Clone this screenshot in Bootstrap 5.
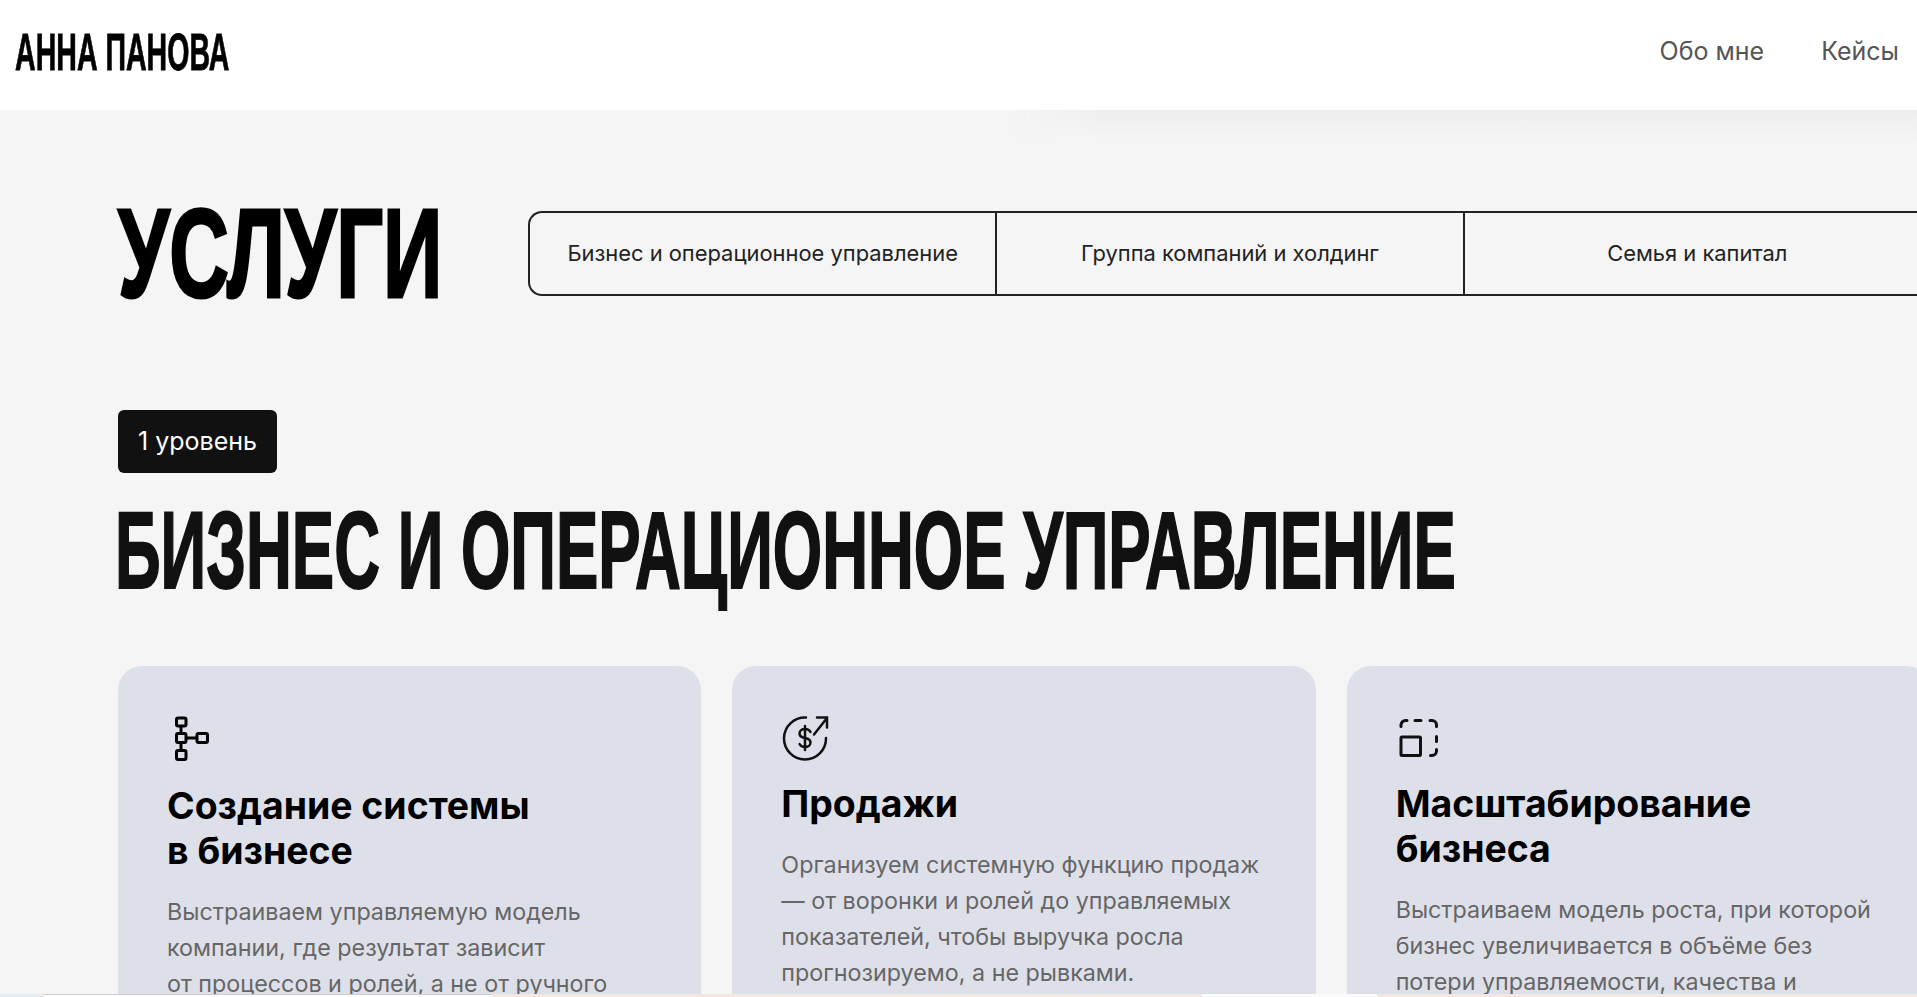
<!DOCTYPE html>
<html lang="ru">

<head>
  <meta charset="UTF-8">
  <meta name="viewport" content="width=device-width, initial-scale=1.0">
  <title>Анна Панова — Услуги</title>
  <link href="https://cdn.jsdelivr.net/npm/bootstrap@5.3.0/dist/css/bootstrap.min.css" rel="stylesheet">
  <script src="https://cdn.jsdelivr.net/npm/bootstrap@5.3.0/dist/js/bootstrap.bundle.min.js"></script>

  <style>
    html,
    body {
      height: 100%;
      overflow: hidden;
    }

    body {
      background-color: #f5f5f5;
      font-family: Inter, "Liberation Sans", sans-serif;
      color: #111;
    }

    .site-header {
      position: relative;
      height: 110px;
      padding: 0 18px 6px 15px;
      background: #fff;
    }

    /* soft shade under the right part of the header */
    .header-shade {
      position: absolute;
      top: 110px;
      left: 1010px;
      right: 0;
      height: 32px;
      background: linear-gradient(#eeeeee, #f5f5f5);
      -webkit-mask-image: linear-gradient(to right, transparent, #000 90px);
      mask-image: linear-gradient(to right, transparent, #000 90px);
    }

    .narrow {
      display: block;
      font-family: "Liberation Sans", sans-serif;
      font-weight: 700;
      line-height: 1;
      white-space: nowrap;
      transform-origin: left center;
      color: #000;
    }

    .logo-box {
      width: 215px;
    }

    .logo-text {
      font-size: 51px;
      -webkit-text-stroke: .8px #000;
      transform: scaleX(.56);
    }

    .site-nav {
      gap: 57px;
    }

    .site-nav a {
      font-size: 25px;
      color: #555;
      text-decoration: none;
    }

    .page-body {
      width: 1812px;
      margin-left: 118px;
    }

    .services-top {
      padding-top: 80px;
    }

    .title-box {
      width: 410px;
      flex: none;
    }

    .title-text {
      font-size: 127px;
      -webkit-text-stroke: 3px #000;
      transform: scaleX(.65);
    }

    .tabs-box {
      flex: 1;
      height: 85px;
      border: 2px solid #222;
      border-radius: 14px 0 0 14px;
      border-right: 0;
    }

    .tab-item {
      flex: 1;
      font-size: 21.9px;
      color: #222;
    }

    .tab-item+.tab-item {
      border-left: 2px solid #222;
    }

    .level-tag {
      width: 159px;
      height: 63px;
      margin-top: 93px;
      border-radius: 6px;
      background: #111;
      color: #fff;
      font-size: 25px;
    }

    .section-name {
      margin: 22px 0 0 -3px;
      font-size: 110px;
      -webkit-text-stroke: 2px #111;
      transform: scaleX(.577);
      color: #111;
    }

    .cards-row {
      gap: 31px;
      margin-top: 61px;
    }

    .service-item {
      flex: 1 1 0;
      height: 500px;
      padding: 50px 50px 50px 49px;
      border-radius: 24px;
      background: #dee0e9;
    }

    .item-icon {
      display: block;
      width: 48px;
      height: 48px;
      margin-bottom: 17px;
    }

    .item-icon-tall {
      height: 50px;
    }

    .item-title {
      margin: 0 0 21px;
      font-size: 37.4px;
      line-height: 45px;
      font-weight: 700;
      color: #000;
    }

    .item-text {
      margin: 0;
      font-size: 23.3px;
      line-height: 36px;
      color: #666;
    }

    .bottom-strip {
      position: fixed;
      left: 0;
      right: 0;
      bottom: 0;
      height: 3px;
    }

    .strip-blue {
      width: 44px;
      background: #e4edf4;
    }

    .strip-tab {
      background: #fff;
      border-top: 1px solid #ccc;
    }

    .strip-first {
      width: 448px;
    }

    .strip-pink {
      background: #f4e7e2;
    }

    .strip-wide {
      width: 710px;
    }

    .strip-white {
      width: 175px;
      background: #fbfbfb;
    }
  </style>

</head>

<body>

  <header class="site-header d-flex align-items-center justify-content-between">
    <div class="logo-box"><span class="narrow logo-text">АННА ПАНОВА</span></div>
    <nav class="site-nav d-flex">
      <a href="#">Обо мне</a>
      <a href="#">Кейсы</a>
    </nav>
    <div class="header-shade"></div>
  </header>

  <main class="page-body">
    <div class="services-top d-flex align-items-center">
      <div class="title-box"><h1 class="narrow title-text m-0">УСЛУГИ</h1></div>
      <div class="tabs-box d-flex">
        <div class="tab-item d-flex align-items-center justify-content-center">Бизнес и операционное управление</div>
        <div class="tab-item d-flex align-items-center justify-content-center">Группа компаний и холдинг</div>
        <div class="tab-item d-flex align-items-center justify-content-center">Семья и капитал</div>
      </div>
    </div>

    <div class="level-tag d-flex align-items-center justify-content-center">1 уровень</div>
    <h2 class="narrow section-name">БИЗНЕС И ОПЕРАЦИОННОЕ УПРАВЛЕНИЕ</h2>

    <div class="cards-row d-flex">
      <div class="service-item">
        <svg class="item-icon item-icon-tall" viewBox="0 0 48 50" fill="none" stroke="#000" stroke-width="3">
          <rect x="9.500" y="2" width="9.500" height="8" rx="1.500" />
          <rect x="9.500" y="17.500" width="9.500" height="9" rx="1.500" />
          <rect x="9.500" y="34.500" width="9.500" height="9" rx="1.500" />
          <rect x="30" y="17.500" width="10.500" height="9" rx="1.500" />
          <path d="M14 10v7.500M14 26.500v8M19 22h11" />
        </svg>
        <h3 class="item-title">Создание системы<br>в бизнесе</h3>
        <p class="item-text">Выстраиваем управляемую модель компании, где результат зависит<br>от процессов и ролей, а не от ручного управления.</p>
      </div>

      <div class="service-item">
        <svg class="item-icon" viewBox="0 0 48 48" fill="none" stroke="#111" stroke-width="2.500" stroke-linecap="round">
          <path d="M25 1.500A21 21 0 1 0 45 22" />
          <path d="M33 18.500 46 2M36 1.500h10v10" />
          <path d="M29.500 16c-1-2-3-3-5.500-3s-5.500 1.500-5.500 4.500 3 4 5.500 4.500 5.500 1.500 5.500 4.500-3 4.500-5.500 4.500-4.500-1-5.500-3M24 10v24" />
        </svg>
        <h3 class="item-title">Продажи</h3>
        <p class="item-text">Организуем системную функцию продаж — от воронки и ролей до управляемых показателей, чтобы выручка росла прогнозируемо, а не рывками.</p>
      </div>

      <div class="service-item">
        <svg class="item-icon" viewBox="0 0 48 48" fill="none" stroke="#111" stroke-width="3" stroke-linecap="round">
          <path d="M5 10.500V9a4.500 4.500 0 0 1 4.500-4.500H11M19 4.500h6M34 4.500h2A4.500 4.500 0 0 1 40.500 9v1.500M40.500 20.500v5M40.500 33.500V35a4.500 4.500 0 0 1-4.500 4.500h-1.500" />
          <rect x="5" y="21" width="19.500" height="18.500" rx="1" />
        </svg>
        <h3 class="item-title">Масштабирование<br>бизнеса</h3>
        <p class="item-text">Выстраиваем модель роста, при которой бизнес увеличивается в объёме без потери управляемости, качества и контроля.</p>
      </div>
    </div>
  </main>

  <div class="bottom-strip d-flex">
    <div class="strip-blue"></div>
    <div class="strip-tab strip-first"></div>
    <div class="strip-pink strip-wide"></div>
    <div class="strip-white"></div>
    <div class="strip-pink flex-grow-1"></div>
  </div>

</body>

</html>
